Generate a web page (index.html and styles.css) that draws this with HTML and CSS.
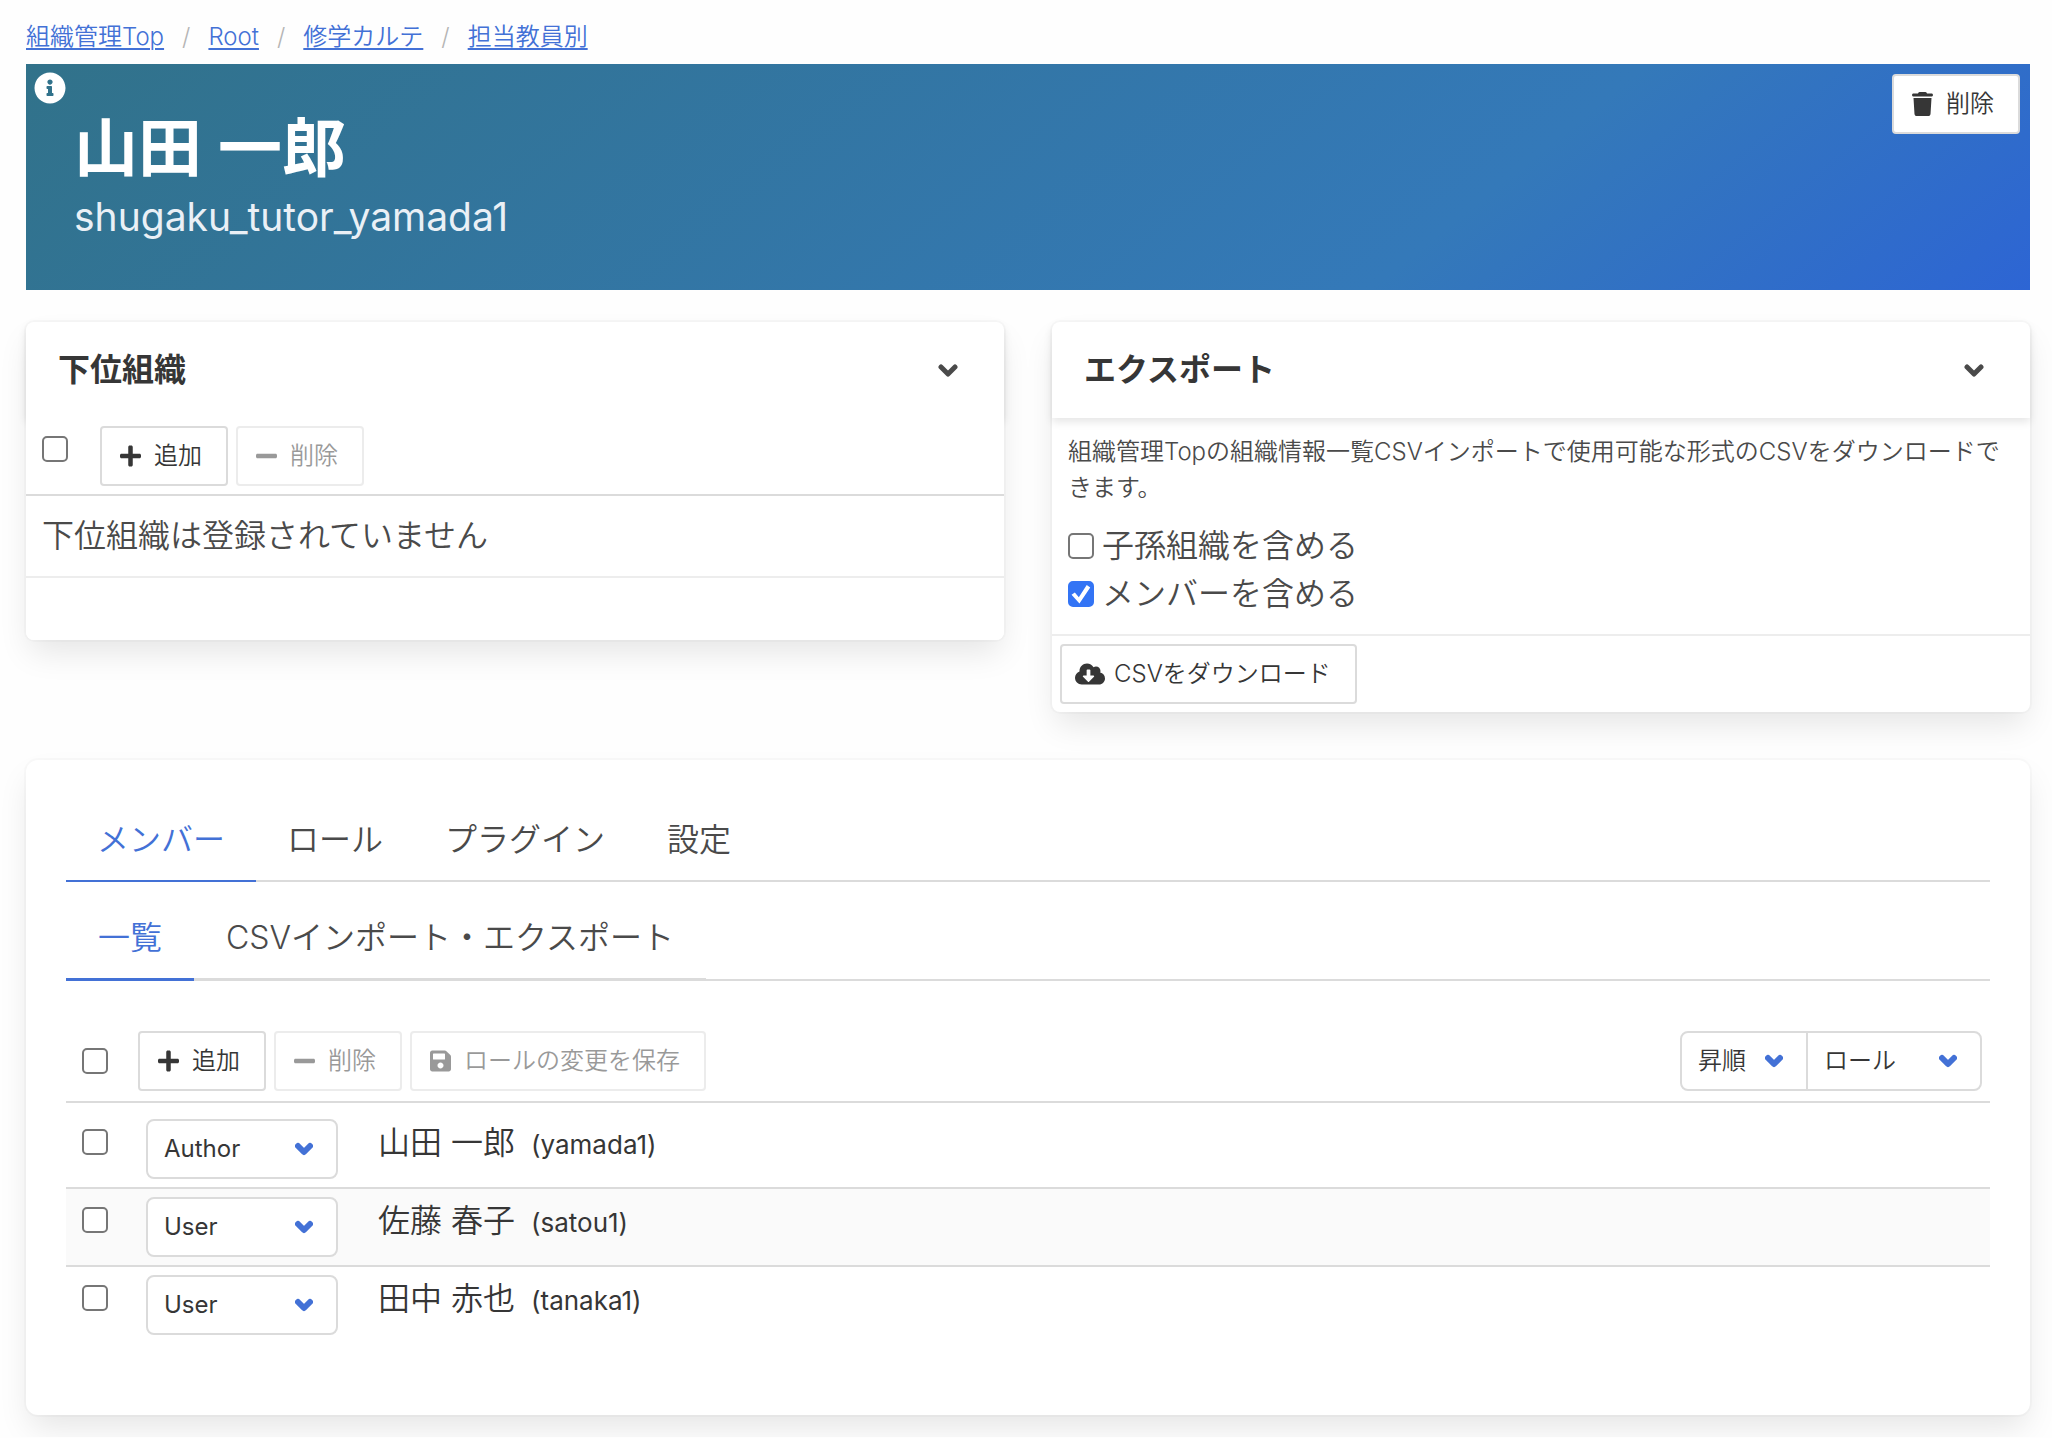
FILE: index.html
```html
<!DOCTYPE html>
<html lang="ja">
<head>
<meta charset="utf-8">
<meta name="viewport" content="width=device-width, initial-scale=1">
<title>山田 一郎 - 組織管理</title>
<link rel="stylesheet" href="styles.css">
</head>
<body>
<svg class="sprite" aria-hidden="true">
  <symbol id="i-info" viewBox="0 0 512 512"><path d="M256 8C119 8 8 119 8 256s111 248 248 248 248-111 248-248S393 8 256 8zm0 110c23 0 42 19 42 42s-19 42-42 42-42-19-42-42 19-42 42-42zm56 254c0 7-5 12-12 12h-88c-7 0-12-5-12-12v-24c0-7 5-12 12-12h12v-64h-12c-7 0-12-5-12-12v-24c0-7 5-12 12-12h64c7 0 12 5 12 12v100h12c7 0 12 5 12 12v24z"/></symbol>
  <symbol id="i-trash" viewBox="0 0 448 512"><path d="M135 18C141 7 152 0 164 0h120c12 0 23 7 29 18l7 14h96c18 0 32 14 32 32s-14 32-32 32H32C14 96 0 82 0 64s14-32 32-32h96l7-14zM32 128h384l-21 339c-2 25-23 45-48 45H101c-25 0-46-20-48-45L32 128z"/></symbol>
  <symbol id="i-plus" viewBox="0 0 448 512"><path d="M416 208H272V64c0-18-14-32-32-32h-32c-18 0-32 14-32 32v144H32c-18 0-32 14-32 32v32c0 18 14 32 32 32h144v144c0 18 14 32 32 32h32c18 0 32-14 32-32V304h144c18 0 32-14 32-32v-32c0-18-14-32-32-32z"/></symbol>
  <symbol id="i-minus" viewBox="0 0 448 512"><path d="M416 208H32c-18 0-32 14-32 32v32c0 18 14 32 32 32h384c18 0 32-14 32-32v-32c0-18-14-32-32-32z"/></symbol>
  <symbol id="i-save" viewBox="0 0 448 512"><path d="M434 130l-84-84a48 48 0 0 0-34-14H48C22 32 0 54 0 80v352c0 26 22 48 48 48h352c26 0 48-22 48-48V164a48 48 0 0 0-14-34zM224 416c-35 0-64-29-64-64s29-64 64-64 64 29 64 64-29 64-64 64zm96-304v100c0 7-5 12-12 12H76c-7 0-12-5-12-12V108c0-7 5-12 12-12h229c3 0 6 1 8 3l4 4c2 2 3 5 3 9z"/></symbol>
  <symbol id="i-cloud" viewBox="0 0 640 512"><path d="M537.600 226.600c4.100-10.700 6.400-22.400 6.400-34.600 0-53-43-96-96-96-19.700 0-38.100 6-53.300 16.200C367 64.200 315.300 32 256 32c-88.400 0-160 71.600-160 160 0 2.700.1 5.400.2 8.100C40.200 219.800 0 273.200 0 336c0 79.500 64.500 144 144 144h368c70.700 0 128-57.300 128-128 0-61.900-44-113.600-102.400-125.400zm-132.900 88.700L299.300 420.700c-6.200 6.200-16.400 6.200-22.600 0L171.300 315.300c-10.100-10.100-2.900-27.300 11.300-27.300H248V176c0-8.800 7.200-16 16-16h48c8.800 0 16 7.200 16 16v112h65.400c14.200 0 21.400 17.200 11.300 27.300z"/></symbol>
  <symbol id="i-angle" viewBox="0 0 20 13"><path d="M3 3l7 7 7-7" fill="none" stroke="currentColor" stroke-width="5" stroke-linecap="round" stroke-linejoin="round"/></symbol>
  <symbol id="i-arrow" viewBox="0 0 18 14"><path d="M3 4l6 6 6-6" fill="none" stroke="currentColor" stroke-width="6" stroke-linecap="round" stroke-linejoin="round"/></symbol>
</svg>

<nav class="breadcrumb" aria-label="パンくず">
  <ul>
    <li><a href="#top">組織管理Top</a></li>
    <li><a href="#root">Root</a></li>
    <li><a href="#karte">修学カルテ</a></li>
    <li><a href="#tutors">担当教員別</a></li>
  </ul>
</nav>

<header class="hero">
  <svg class="hero-info" role="img" aria-label="情報"><use href="#i-info"/></svg>
  <h1 class="title">山田 一郎</h1>
  <p class="subtitle">shugaku_tutor_yamada1</p>
  <button type="button" class="button hero-delete"><span class="icon"><svg class="glyph"><use href="#i-trash"/></svg></span>削除</button>
</header>

<main>
  <div class="columns">
    <section class="card">
      <header class="card-header">
        <h2>下位組織</h2>
        <button type="button" class="toggle" aria-label="下位組織を開閉"><svg class="angle"><use href="#i-angle"/></svg></button>
      </header>
      <div class="card-body">
        <div class="child-tools">
          <input type="checkbox" class="check" aria-label="下位組織をすべて選択">
          <div class="buttons">
            <button type="button" class="button"><span class="icon"><svg class="glyph"><use href="#i-plus"/></svg></span>追加</button>
            <button type="button" class="button" disabled><span class="icon"><svg class="glyph"><use href="#i-minus"/></svg></span>削除</button>
          </div>
        </div>
        <p class="empty">下位組織は登録されていません</p>
        <div class="card-end"></div>
      </div>
    </section>

    <section class="card">
      <header class="card-header">
        <h2>エクスポート</h2>
        <button type="button" class="toggle" aria-label="エクスポートを開閉"><svg class="angle"><use href="#i-angle"/></svg></button>
      </header>
      <div class="export">
        <p class="note">組織管理Topの組織情報一覧CSVインポートで使用可能な形式のCSVをダウンロードで<wbr>きます。</p>
        <label class="option"><input type="checkbox" class="check">子孫組織を含める</label>
        <label class="option"><input type="checkbox" class="check" checked>メンバーを含める</label>
      </div>
      <footer class="card-footer">
        <button type="button" class="button"><span class="icon"><svg class="glyph glyph-wide"><use href="#i-cloud"/></svg></span>CSVをダウンロード</button>
      </footer>
    </section>
  </div>

  <section class="box">
    <nav class="tabs" aria-label="組織">
      <a href="#members" class="tab active">メンバー</a>
      <a href="#roles" class="tab">ロール</a>
      <a href="#plugins" class="tab">プラグイン</a>
      <a href="#settings" class="tab">設定</a>
    </nav>
    <nav class="tabs subtabs" aria-label="メンバー">
      <a href="#list" class="tab active">一覧</a>
      <a href="#csv" class="tab">CSVインポート・エクスポート</a>
    </nav>

    <table class="members">
      <thead>
        <tr>
          <th class="col-check"><input type="checkbox" class="check" aria-label="メンバーをすべて選択"></th>
          <th colspan="2">
            <div class="toolbar">
              <div class="buttons">
                <button type="button" class="button"><span class="icon"><svg class="glyph"><use href="#i-plus"/></svg></span>追加</button>
                <button type="button" class="button" disabled><span class="icon"><svg class="glyph"><use href="#i-minus"/></svg></span>削除</button>
                <button type="button" class="button" disabled><span class="icon"><svg class="glyph"><use href="#i-save"/></svg></span>ロールの変更を保存</button>
              </div>
              <div class="sort">
                <div class="select select-order"><select aria-label="並び順"><option>昇順</option><option>降順</option></select><svg class="arrow"><use href="#i-arrow"/></svg></div>
                <div class="select select-key"><select aria-label="並べ替え項目"><option>ロール</option><option>名前</option></select><svg class="arrow"><use href="#i-arrow"/></svg></div>
              </div>
            </div>
          </th>
        </tr>
      </thead>
      <tbody>
        <tr>
          <td class="col-check"><input type="checkbox" class="check" aria-label="山田 一郎を選択"></td>
          <td class="col-role"><div class="select"><select aria-label="山田 一郎のロール"><option>Author</option><option>User</option></select><svg class="arrow"><use href="#i-arrow"/></svg></div></td>
          <td class="col-name">山田 一郎<span class="account">(yamada1)</span></td>
        </tr>
        <tr>
          <td class="col-check"><input type="checkbox" class="check" aria-label="佐藤 春子を選択"></td>
          <td class="col-role"><div class="select"><select aria-label="佐藤 春子のロール"><option>User</option><option>Author</option></select><svg class="arrow"><use href="#i-arrow"/></svg></div></td>
          <td class="col-name">佐藤 春子<span class="account">(satou1)</span></td>
        </tr>
        <tr>
          <td class="col-check"><input type="checkbox" class="check" aria-label="田中 赤也を選択"></td>
          <td class="col-role"><div class="select"><select aria-label="田中 赤也のロール"><option>User</option><option>Author</option></select><svg class="arrow"><use href="#i-arrow"/></svg></div></td>
          <td class="col-name">田中 赤也<span class="account">(tanaka1)</span></td>
        </tr>
      </tbody>
    </table>
  </section>
</main>
</body>
</html>
```
FILE: styles.css
```css
*,
*::before,
*::after {
  box-sizing: border-box;
}

:root {
  --link: #4371d6;
  --text: #4a4a4a;
  --strong: #363636;
  --border: #dbdbdb;
  --border-light: #ededed;
}

body {
  margin: 0;
  padding: 19px 22px 22px 26px;
  background: #fefefe;
  color: var(--text);
  font-family: Inter, "Noto Sans CJK JP", sans-serif;
  font-weight: 350;
  font-size: 32px;
  line-height: 48px;
}

h1, h2, p, ul {
  margin: 0;
  padding: 0;
}

button, select, input {
  margin: 0;
  font: inherit;
  color: inherit;
}

.sprite {
  display: none;
}

svg {
  fill: currentColor;
}

/* Breadcrumb */
.breadcrumb ul {
  display: flex;
  margin-bottom: 9px;
  list-style: none;
  font-size: 24px;
  line-height: 36px;
}

.breadcrumb li + li::before {
  content: "/";
  margin: 0 18px;
  color: #b5b5b5;
}

.breadcrumb a {
  color: var(--link);
  text-decoration: underline;
  text-decoration-thickness: 2px;
  text-underline-offset: 3px;
}

/* Hero */
.hero {
  position: relative;
  padding: 48px;
  background: linear-gradient(141deg, #31728a 0%, #3479b9 71%, #2d65d4 100%);
  color: #fff;
}

.hero-info {
  position: absolute;
  top: 8px;
  left: 8px;
  width: 32px;
  height: 32px;
}

.title {
  font-size: 64px;
  font-weight: 600;
  line-height: 72px;
}

.subtitle {
  margin-top: 8px;
  color: #eaf0f6;
  font-size: 39px;
  font-weight: 400;
  line-height: 50px;
}

.hero-delete {
  position: absolute;
  top: 10px;
  right: 10px;
}

/* Controls */
.button {
  display: inline-flex;
  align-items: center;
  height: 60px;
  padding: 0 24px 0 12px;
  border: 2px solid var(--border);
  border-radius: 4px;
  background: #fff;
  color: var(--strong);
  font-size: 24px;
  line-height: 36px;
  white-space: nowrap;
}

.button:disabled {
  opacity: 0.5;
}

.buttons {
  display: flex;
  gap: 8px;
}

.icon {
  display: flex;
  justify-content: center;
  width: 32px;
  margin-right: 8px;
}

.glyph {
  width: 21px;
  height: 24px;
}

.glyph-wide {
  width: 30px;
}

.check {
  appearance: none;
  display: block;
  flex: none;
  width: 26px;
  height: 26px;
  border: 2px solid #767676;
  border-radius: 5px;
  background: #fff;
}

.check:checked {
  border-color: #3374f5;
  background: #3374f5;
}

.check:checked::before {
  content: "";
  display: block;
  width: 22px;
  height: 22px;
  background: #fff;
  clip-path: polygon(7% 53%, 22% 43%, 40% 65%, 76% 9%, 92% 20%, 43% 93%);
}

.select {
  position: relative;
}

.select select {
  appearance: none;
  display: block;
  width: 100%;
  height: 60px;
  padding: 0 48px 0 16px;
  border: 2px solid var(--border);
  border-radius: 8px;
  background: #fff;
  color: var(--strong);
  font-size: 24px;
}

.arrow {
  position: absolute;
  top: 23px;
  right: 25px;
  width: 18px;
  height: 14px;
  color: var(--link);
  pointer-events: none;
}

/* Cards */
.columns {
  display: grid;
  grid-template-columns: 1fr 1fr;
  align-items: start;
  gap: 48px;
  margin: 32px 0 48px;
}

.card,
.box {
  background: #fff;
  box-shadow: 0 16px 32px -4px rgba(10, 10, 10, 0.1), 0 0 0 2px rgba(10, 10, 10, 0.02);
}

.card {
  border-radius: 8px;
}

.card-header {
  display: flex;
  justify-content: space-between;
  align-items: center;
  height: 96px;
  padding: 0 46px 0 32px;
  border-radius: 8px 8px 0 0;
  box-shadow: 0 4px 8px rgba(10, 10, 10, 0.1);
}

.card-header h2 {
  color: var(--strong);
  font-size: 32px;
  font-weight: 700;
}

.toggle {
  display: flex;
  padding: 0;
  border: 0;
  background: none;
}

.angle {
  width: 20px;
  height: 13px;
}

.card-body {
  border-radius: 0 0 8px 8px;
  background: #fff;
}

.child-tools {
  display: flex;
  align-items: flex-start;
  gap: 32px;
  padding: 8px 16px;
  border-bottom: 2px solid var(--border);
}

.child-tools .check {
  margin-top: 10px;
}

.empty {
  padding: 16px;
}

.card-end {
  height: 64px;
  border-top: 2px solid var(--border-light);
}

.export {
  padding: 16px;
}

.note {
  margin-bottom: 16px;
  font-size: 24px;
  line-height: 36px;
}

.option {
  display: flex;
  align-items: center;
  gap: 8px;
}

.card-footer {
  display: flex;
  padding: 8px;
  border-top: 2px solid var(--border-light);
}

/* Member panel */
.box {
  padding: 40px;
  border-radius: 12px;
}

.tabs {
  display: flex;
  border-bottom: 2px solid var(--border);
}

.tab {
  margin-bottom: -2px;
  padding: 16px 31px;
  border-bottom: 2px solid var(--border);
  color: var(--text);
  text-decoration: none;
}

.tab.active {
  border-color: var(--link);
  color: var(--link);
}

.subtabs {
  margin: 16px 0 50px;
}

.subtabs .tab {
  padding: 16px 32px;
  border-bottom-width: 3px;
}

.members {
  width: 100%;
  margin-bottom: 32px;
  border-collapse: separate;
  border-spacing: 0;
}

.members th,
.members td {
  padding: 8px;
  font-weight: inherit;
  text-align: left;
  vertical-align: top;
}

.members th {
  padding: 0 8px 10px;
  border-bottom: 2px solid var(--border);
  vertical-align: middle;
}

.members td {
  border-bottom: 2px solid var(--border);
}

.members tr:first-child td {
  padding-top: 16px;
}

.members tr:last-child td {
  border-bottom: 0;
}

.members tr:nth-child(even) {
  background: #fafafa;
}

.members .col-check {
  width: 64px;
  padding-left: 16px;
}

td .check {
  margin-top: 10px;
}

.members .col-role {
  width: 224px;
  padding-left: 16px;
  padding-right: 16px;
}

.members .col-name {
  padding-left: 24px;
  color: var(--strong);
}

.col-role select {
  font-weight: 400;
}

.account {
  margin-left: 16px;
  font-size: 26px;
  font-weight: 400;
}

.toolbar {
  display: flex;
  justify-content: space-between;
}

.sort {
  display: flex;
}

.select-order {
  width: 128px;
}

.select-key {
  width: 176px;
  margin-left: -2px;
}

.select-order select {
  border-radius: 8px 0 0 8px;
}

.select-key select {
  border-radius: 0 8px 8px 0;
}
```
